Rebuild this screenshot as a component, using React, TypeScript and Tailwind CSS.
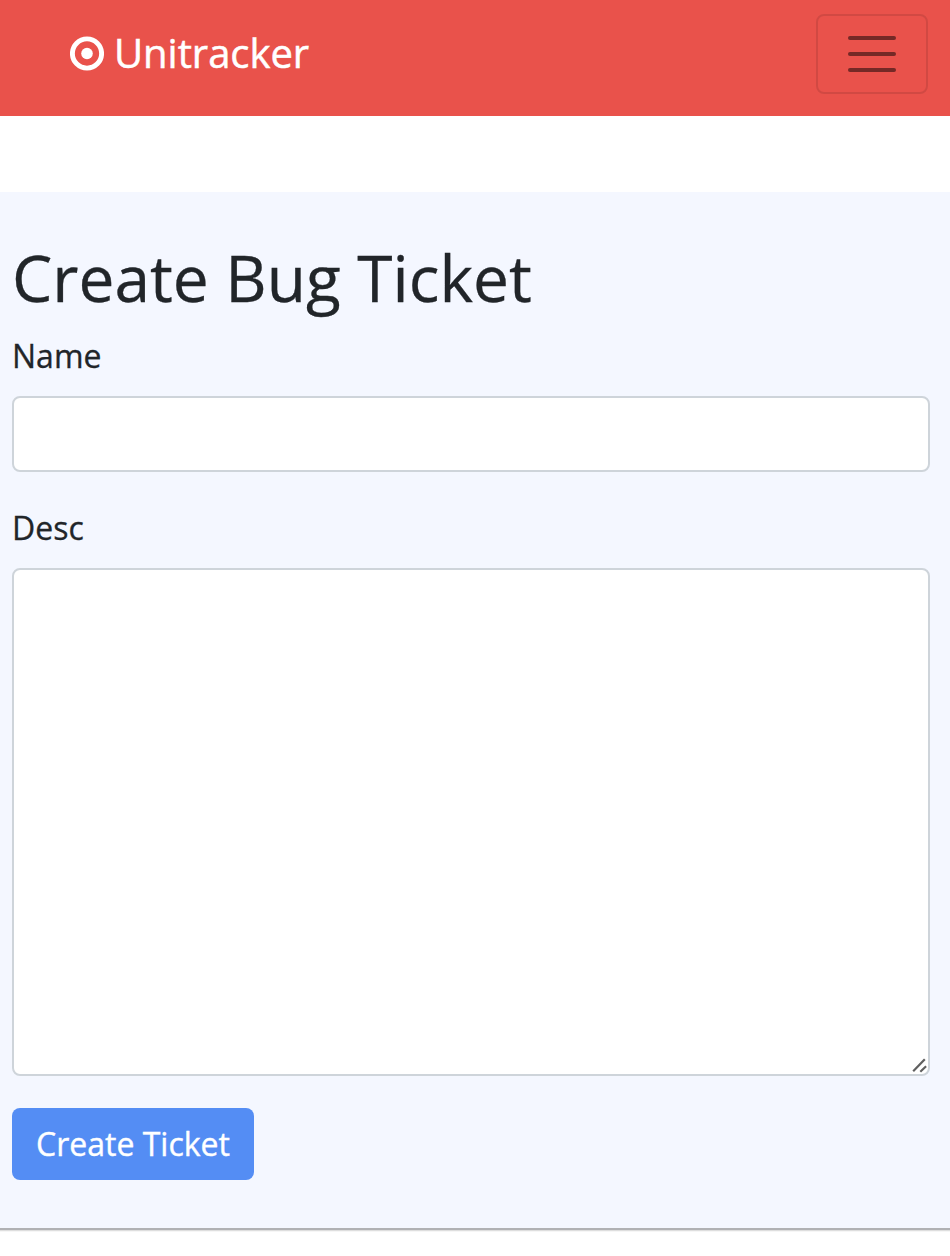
export default function App() {
  return (
    <div className="flex min-h-[1256px] flex-col bg-white font-['Open_Sans','Noto_Sans',sans-serif] text-[#212529]">
      <header className="flex h-[116px] items-start justify-between bg-[#e9524b] pl-[70px] pr-[22px] pt-[14px]">
        <a href="#" className="flex h-[79px] items-center text-[40px] text-white">
          <svg className="mr-[10px]" width="34" height="35" viewBox="0 0 34 35" aria-hidden="true">
            <circle cx="17" cy="17.5" r="14.6" fill="none" stroke="white" strokeWidth="4.9" />
            <circle cx="17" cy="17.5" r="5.8" fill="white" />
          </svg>
          <span className="pb-0.5 tracking-[-0.05px] [-webkit-text-stroke:0.5px_white]">Unitracker</span>
        </a>
        <button aria-label="Menu" className="flex h-20 w-28 flex-col items-center justify-center gap-3 rounded-lg border-2 border-black/10">
          <span className="h-1 w-12 rounded-full bg-[#752926]" />
          <span className="h-1 w-12 rounded-full bg-[#752926]" />
          <span className="h-1 w-12 rounded-full bg-[#752926]" />
        </button>
      </header>
      <main className="mt-[76px] flex h-[1036px] flex-col items-start bg-[#f4f7ff] pl-3 pr-5 pt-12">
        <h1 className="h-[92px] text-[64px] leading-[76px] [-webkit-text-stroke:0.3px_#212529]">Create Bug Ticket</h1>
        <label htmlFor="name" className="mb-4 text-[32px] leading-[48px] [-webkit-text-stroke:0.3px_#212529]">Name</label>
        <input id="name" className="h-[76px] w-full rounded-lg border-2 border-[#ced4da] bg-white px-6" />
        <label htmlFor="desc" className="mb-4 mt-8 text-[32px] leading-[48px] [-webkit-text-stroke:0.3px_#212529]">Desc</label>
        <div className="relative w-full">
          <textarea id="desc" className="block h-[508px] w-full resize-none rounded-lg border-2 border-[#ced4da] bg-white px-6" />
          <svg className="pointer-events-none absolute bottom-[3px] right-[2px]" width="16" height="16" viewBox="0 0 16 16" aria-hidden="true">
            <path d="M1.2 14.3 12.8 2.2M8.3 14.8l5.8-5.5" fill="none" stroke="#606060" strokeWidth="2.2" />
          </svg>
        </div>
        <button className="mt-8 h-[72px] w-[242px] rounded-lg bg-[#548df4] text-[32px] text-white [-webkit-text-stroke:0.4px_white]">Create Ticket</button>
      </main>
      <div className="h-0.5 bg-[#b0b1b4]" />
      <div className="h-px bg-[#dedede]" />
      <div className="h-px bg-[#f6f6f6]" />
    </div>
  );
}
